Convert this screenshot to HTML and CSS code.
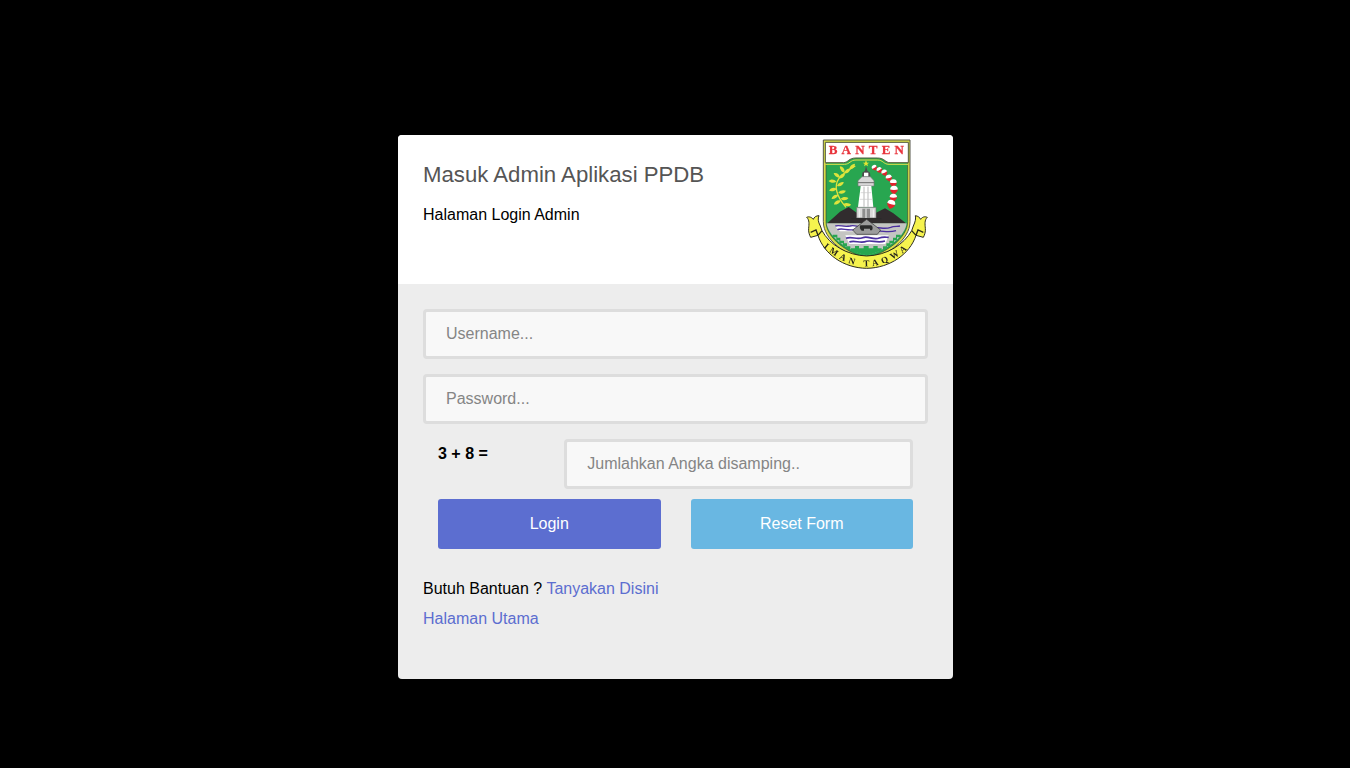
FILE: index.html
```html
<!DOCTYPE html>
<html lang="id">
<head>
<meta charset="utf-8">
<title>Masuk Admin Aplikasi PPDB</title>
<link rel="stylesheet" href="styles.css">
</head>
<body>
<main class="card">
  <header class="card-head">
    <div class="head-text">
      <h1 class="title">Masuk Admin Aplikasi PPDB</h1>
      <p class="subtitle">Halaman Login Admin</p>
    </div>
    <svg class="logo" viewBox="45 24 369 396" width="123" height="132" aria-label="Logo Banten">
      <defs>
        <path id="arc" d="M96 348 Q230 470 364 348"/>
        <g id="flower"><path d="M-11 -2 A11 11 0 0 1 11 -2Z" fill="#fff"/><path d="M-11 -3 L11 -3 C11 4 5 8 0 12 C-5 8 -11 4 -11 -3Z" fill="#e0242c"/><path d="M-11 -3 C-5 -7 5 -7 11 -3 C5 0 -5 0 -11 -3Z" fill="#fff"/></g>
        <path id="leaf" d="M0 0 C5 -9 15 -10 22 -8 C19 1 9 5 0 0Z" fill="#dfe33c"/>
      </defs>
      <!-- shield -->
      <path d="M100 30 H360 V275 C360 330 290 378 230 392 C170 378 100 330 100 275Z" fill="#d8de4a" stroke="#55564a" stroke-width="3"/>
      <path d="M108 38 H353 V275 C353 325 285 370 230 384 C175 370 108 325 108 275Z" fill="#28a650" stroke="#3f4a34" stroke-width="2"/>
      <!-- banner -->
      <path d="M106 37 H355 V98 H300 C285 98 285 84 262 84 H198 C175 84 175 98 160 98 H106Z" fill="#fff" stroke="#565c3a" stroke-width="3"/>
      <path d="M106 103 H163 C180 103 180 90 198 90 H262 C280 90 280 103 297 103 H354" fill="none" stroke="#e1e34c" stroke-width="3"/>
      <text class="banner" x="229" y="72" textLength="226" lengthAdjust="spacing" text-anchor="middle">BANTEN</text>
      <path d="M228 91 L231 98 L238 98 L232 102 L234 109 L228 105 L222 109 L224 102 L218 98 L225 98Z" fill="#e3e532"/>
      <!-- branch -->
      <path d="M168 232 C145 205 128 172 147 145 C160 128 178 118 196 108" fill="none" stroke="#dfe33c" stroke-width="4"/>
      <use href="#leaf" transform="translate(160 222) rotate(25)"/>
      <use href="#leaf" transform="translate(152 212) rotate(170)"/>
      <use href="#leaf" transform="translate(152 206) rotate(15)"/>
      <use href="#leaf" transform="translate(145 195) rotate(170)"/>
      <use href="#leaf" transform="translate(145 188) rotate(5)"/>
      <use href="#leaf" transform="translate(140 176) rotate(185)"/>
      <use href="#leaf" transform="translate(141 168) rotate(-10)"/>
      <use href="#leaf" transform="translate(139 155) rotate(205)"/>
      <use href="#leaf" transform="translate(147 145) rotate(-20)"/>
      <use href="#leaf" transform="translate(150 143) rotate(235)"/>
      <use href="#leaf" transform="translate(163 130) rotate(-20)"/>
      <use href="#leaf" transform="translate(163 128) rotate(255)"/>
      <use href="#leaf" transform="translate(178 118) rotate(-25)"/>
      <!-- flowers -->
      <use href="#flower" transform="translate(254 114) rotate(-30) scale(.72)"/>
      <use href="#flower" transform="translate(269 121) rotate(-30) scale(.75)"/>
      <use href="#flower" transform="translate(284 129) rotate(-25) scale(.8)"/>
      <use href="#flower" transform="translate(297 145) rotate(-15) scale(.85)"/>
      <use href="#flower" transform="translate(310 160) scale(.95)"/>
      <use href="#flower" transform="translate(312 181) scale(1.05)"/>
      <use href="#flower" transform="translate(310 204) scale(1)"/>
      <use href="#flower" transform="translate(303 224) rotate(15) scale(1.1)"/>
      <!-- mountains -->
      <path d="M110 281 L150 245 L176 231 L200 248 L258 248 L285 235 L310 250 L350 281Z" fill="#312c2e"/>
      <!-- lighthouse -->
      <path d="M228 108 L232 122 L240 128 L241 140 H216 L217 128 L225 122Z" fill="#4b4b4b"/>
      <path d="M222 128 H235 V140 H222Z" fill="#fff"/>
      <path d="M204 152 L216 140 H241 L252 152 V168 H204Z" fill="#d8d8d8" stroke="#77777a" stroke-width="2"/>
      <path d="M204 158 H252" stroke="#6d6d6d" stroke-width="3"/>
      <path d="M212 168 H244 L250 232 H204Z" fill="#fff"/>
      <path d="M222 170 V230 M234 170 V230" stroke="#b9b9b9" stroke-width="3"/>
      <path d="M212 188 H244 M209 208 H247" stroke="#c8c8c8" stroke-width="2"/>
      <path d="M200 232 H258 V264 H200Z" fill="#d9d9d9" stroke="#6f6f6f" stroke-width="2"/>
      <path d="M217 236 H240 V264 H217Z" fill="#8e8e8e"/>
      <path d="M228 236 V264 M208 238 V262 M250 238 V262" stroke="#f4f4f4" stroke-width="3"/>
      <path d="M184 266 H274" stroke="#2a2a2a" stroke-width="3"/>
      <!-- ground -->
      <path d="M110 280 H350 C346 315 300 358 230 376 C160 358 114 315 110 280Z" fill="#c4c5c2"/>
      <path d="M136 288 C150 283 160 294 180 288 C195 284 200 291 212 290 V304 H150 C145 300 140 295 136 288Z" fill="#fff"/>
      <path d="M136 288 C150 283 160 293 180 288 C190 285 198 288 205 290 M142 299 C158 292 170 304 198 298" fill="none" stroke="#4a2f9e" stroke-width="4"/>
      <path d="M250 296 C265 288 280 300 302 292 C312 288 322 290 330 288 M255 306 C270 298 290 310 318 302" fill="none" stroke="#4a2f9e" stroke-width="4"/>
      <path d="M166 316 H296 L286 342 H178Z" fill="#fff"/>
      <path d="M168 325 C185 317 200 331 218 323 C235 316 250 332 268 324 C278 320 288 322 296 322 M178 336 C195 329 210 342 230 334 C245 329 262 341 285 333" fill="none" stroke="#4a2f9e" stroke-width="5"/>
      <path d="M230 268 L188 300 L200 313 H262 L272 300Z" fill="#9c9c9c" stroke="#2f2f2f" stroke-width="2"/>
      <path d="M211 286 H243 C249 288 249 296 246 301 H240 V296 H222 V302 H215 C209 298 208 290 211 286Z" fill="#2b2b2b"/>
      <path d="M128 322 h11 v9 h9 v9 h11 v8 h10 v9 h12 v-8 h-10 v-9 h-9 v-8 h-11 v-9 h-9 v-9 h-14Z" fill="#28a650"/>
      <path d="M332 322 h-11 v9 h-9 v9 h-11 v8 h-10 v9 h-12 v-8 h10 v-9 h9 v-8 h11 v-9 h9 v-9 h14Z" fill="#28a650"/>
      <path d="M183 355 h12 v-7 h12 v7 h14 v-7 h15 v7 h14 v-7 h13 v7 h12 v6 c-20 8 -30 13 -45 15 c-15 -2 -30 -8 -47 -15Z" fill="#28a650"/>
      <!-- ribbon -->
      <path d="M50 262 C58 258 66 263 70 268 C72 262 78 257 87 257 C83 266 84 275 91 288 L96 302 C118 343 170 376 230 378 C292 376 342 343 365 302 L370 288 C376 275 378 266 376 257 C384 258 390 263 392 268 C396 262 403 258 412 262 C403 270 405 283 406 295 C407 305 404 315 400 322 L378 316 C360 372 300 414 230 415 C160 414 102 372 84 316 L62 322 C58 315 55 305 56 295 C57 283 59 270 50 262Z" fill="#f6f34e" stroke="#2c2c1c" stroke-width="3" stroke-linejoin="round"/>
      <path d="M96 302 L84 316 M365 302 L378 316 M62 307 L78 300 L84 316 M400 307 L384 300 L378 316" fill="none" stroke="#2c2c1c" stroke-width="4"/>
      <text class="motto"><textPath href="#arc" startOffset="50%" text-anchor="middle">IMAN TAQWA</textPath></text>
    </svg>
  </header>
  <form class="card-body">
    <input class="field" type="text" placeholder="Username...">
    <input class="field" type="password" placeholder="Password...">
    <div class="sum-row">
      <label class="sum-label">3 + 8 =</label>
      <input class="field field-sum" type="text" placeholder="Jumlahkan Angka disamping..">
    </div>
    <div class="actions">
      <button class="btn btn-login" type="button">Login</button>
      <button class="btn btn-reset" type="button">Reset Form</button>
    </div>
    <p class="help">Butuh Bantuan ? <a href="#">Tanyakan Disini</a></p>
    <p class="help"><a href="#">Halaman Utama</a></p>
  </form>
</main>
</body>
</html>
```
FILE: styles.css
```css
* { box-sizing: border-box; }
html, body { margin: 0; height: 100%; }
body {
  background: #000;
  padding: 135px 0 0 1px;
  font-family: "Liberation Sans", Arial, sans-serif;
  font-size: 16px;
  color: #000;
  overflow: hidden;
}
.card {
  width: 555px;
  height: 544px;
  margin: 0 auto;
  border-radius: 4px;
  overflow: hidden;
  background: #ededed;
}
.card-head {
  height: 149px;
  background: #fff;
  padding: 3px 25px 0;
  display: flex;
  justify-content: space-between;
  align-items: flex-start;
}
.head-text { padding-top: 23px; }
.title {
  margin: 0;
  font-size: 22.2px;
  font-weight: 400;
  line-height: 28px;
  color: #555;
}
.subtitle {
  margin: 18px 0 0;
  line-height: 16px;
}
.logo { display: block; filter: blur(.3px); }
.banner {
  font: 700 39px "Liberation Serif", serif;
  fill: #e8343c;
  stroke: #e8343c;
  stroke-width: .8px;
}
.motto {
  font: 700 27px "Liberation Serif", serif;
  letter-spacing: 11px;
  fill: #23231a;
}
.card-body {
  padding: 25px;
  display: flex;
  flex-direction: column;
}
.field {
  display: block;
  width: 100%;
  height: 50px;
  margin: 0 0 15px;
  padding: 0 20px;
  border: 3px solid #ddd;
  border-radius: 4px;
  background: #f8f8f8;
  font: 16px "Liberation Sans", Arial, sans-serif;
  color: #333;
  outline: none;
}
.field::placeholder { color: #858585; opacity: 1; }
.sum-row {
  display: grid;
  grid-template-columns: 126.25px 1fr;
  padding-right: 15px;
  margin-bottom: 10px;
}
.sum-label {
  padding-left: 15px;
  font-weight: 700;
  line-height: 30px;
}
.field-sum {
  margin: 0 0 0 15px;
  width: calc(100% - 15px);
}
.actions {
  display: grid;
  grid-template-columns: 1fr 1fr;
  gap: 30px;
  padding: 0 15px;
  margin-bottom: 25px;
}
.btn {
  height: 50px;
  border: 0;
  border-radius: 3px;
  color: #fff;
  font: 16px "Liberation Sans", Arial, sans-serif;
}
.btn-login { background: #5c6ed0; }
.btn-reset { background: #69b7e2; }
.help {
  margin: 0;
  line-height: 30px;
}
.help a {
  color: #5c6ed0;
  text-decoration: none;
}
```
